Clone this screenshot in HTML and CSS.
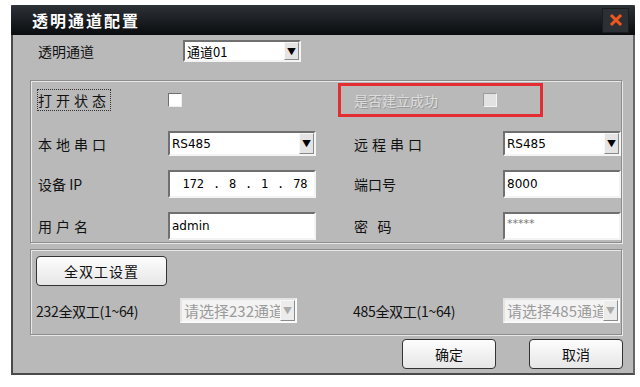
FILE: index.html
```html
<!DOCTYPE html>
<html lang="zh-CN">
<head>
  <meta charset="UTF-8">
  <title>透明通道配置</title>
  <link rel="stylesheet" href="styles.css">
</head>
<body>

  <div class="dialog">
    <div class="titlebar">
      <span class="title">透明通道配置</span>
      <span class="close-btn">
        <svg width="14" height="14" viewBox="0 0 14 14">
          <path d="M3 3 L11 11 M11 3 L3 11" stroke="#f0561e" stroke-width="3" stroke-linecap="square"/>
        </svg>
      </span>
    </div>

    <div class="content">
      <div class="channel-row">
        <span class="label">透明通道</span>
        <div class="select channel-select">
          <span class="select-text">通道01</span>
          <span class="arrow">&#9660;</span>
        </div>
      </div>

      <div class="group main-group">
        <span class="label spaced focus">打开状态</span>
        <span class="checkbox"></span>
        <div class="status-box">
          <span class="label disabled">是否建立成功</span>
          <span class="checkbox disabled-box"></span>
        </div>

        <span class="label spaced">本地串口</span>
        <div class="select">
          <span class="select-text small">RS485</span>
          <span class="arrow">&#9660;</span>
        </div>
        <span></span>
        <span class="label spaced right-col">远程串口</span>
        <div class="select">
          <span class="select-text small">RS485</span>
          <span class="arrow">&#9660;</span>
        </div>

        <span class="label">设备 IP</span>
        <div class="input ip">
          <span>172</span><span>.</span><span>8</span><span>.</span><span>1</span><span>.</span><span>78</span>
        </div>
        <span></span>
        <span class="label right-col">端口号</span>
        <div class="input"><span class="small">8000</span></div>

        <span class="label spaced">用户名</span>
        <div class="input"><span class="small">admin</span></div>
        <span></span>
        <span class="label right-col">密&nbsp;&nbsp;&nbsp;码</span>
        <div class="input password"><span>*****</span></div>
      </div>

      <div class="group duplex-group">
        <div class="duplex-top">
          <button class="btn duplex-btn">全双工设置</button>
        </div>
        <div class="duplex-row">
          <span class="label small-label">232全双工(1~64)</span>
          <div class="select disabled-select left-select">
            <span class="select-text">请选择232通道</span>
            <span class="arrow">&#9660;</span>
          </div>
          <span class="label small-label right-label">485全双工(1~64)</span>
          <div class="select disabled-select">
            <span class="select-text">请选择485通道</span>
            <span class="arrow">&#9660;</span>
          </div>
        </div>
      </div>

      <div class="footer">
        <button class="btn ok-btn">确定</button>
        <button class="btn">取消</button>
      </div>
    </div>
  </div>

</body>
</html>
```

FILE: styles.css
```css
body {
  margin: 0;
  background: #fff;
  font-family: "Noto Sans CJK SC", "DejaVu Sans", sans-serif;
}

.dialog {
  width: 620px;
  height: 368px;
  margin: 5px 0 0 11px;
  background: #b9b9b9;
  border: 2px solid #4a4a4a;
  border-top: none;
  border-right-color: #666;
  display: flex;
  flex-direction: column;
}

.titlebar {
  height: 30px;
  margin: 0 -2px;
  background: linear-gradient(#2d3237, #0a0c0e);
  border-radius: 3px 3px 0 0;
  display: flex;
  align-items: center;
  justify-content: space-between;
  padding: 0 6px 0 21px;
}

.title {
  color: #fff;
  font-weight: bold;
  font-size: 16px;
  letter-spacing: 2px;
}

.close-btn {
  width: 25px;
  height: 23px;
  background: #2c3034;
  border: 1px solid #1a1c1e;
  display: flex;
  align-items: center;
  justify-content: center;
}

.content {
  padding: 5px 4px 0 17px;
  display: flex;
  flex-direction: column;
}

.label {
  font-size: 14px;
  color: #111;
  white-space: nowrap;
}

.spaced {
  letter-spacing: 4px;
}

.focus {
  outline: 1px dotted #333;
  outline-offset: 0;
  justify-self: start;
}

.channel-row {
  display: flex;
  align-items: center;
  height: 22px;
  margin-left: 8px;
  margin-bottom: 18px;
}

.channel-row .label {
  width: 145px;
}

.select {
  background: #fff;
  border: 2px solid;
  border-color: #707070 #f4f4f4 #f4f4f4 #707070;
  display: flex;
  align-items: center;
  justify-content: space-between;
  box-sizing: border-box;
  overflow: hidden;
}

.channel-select {
  width: 118px;
  height: 22px;
}

.select-text {
  font-size: 13px;
  padding-left: 2px;
  white-space: nowrap;
  overflow: hidden;
}

.small {
  font-family: "DejaVu Sans", sans-serif;
  font-size: 12px;
}

.arrow {
  flex: none;
  width: 15px;
  height: 100%;
  box-sizing: border-box;
  background: #e4e4e4;
  border: 1px solid;
  border-color: #f8f8f8 #8a8a8a #8a8a8a #f8f8f8;
  font-size: 9px;
  display: flex;
  align-items: center;
  justify-content: center;
  color: #000;
}

.group {
  border: 1px solid #8c8c8c;
  box-shadow: inset 1px 1px 0 #e8e8e8, 1px 1px 0 #e8e8e8;
  width: 592px;
}

.main-group {
  height: 163px;
  box-sizing: border-box;
  padding: 2px 0 0 7px;
  display: grid;
  grid-template-columns: 130px 148px 23px 164px 118px;
  grid-template-rows: 34px 25px 28px 28px;
  row-gap: 14px;
  align-items: center;
}

.right-col {
  padding-left: 15px;
}

.checkbox {
  width: 12px;
  height: 12px;
  background: #fff;
  border: 1px solid;
  border-color: #707070 #eee #eee #707070;
}

.status-box {
  grid-column: 3 / 6;
  width: 205px;
  height: 34px;
  margin-left: 22px;
  box-sizing: border-box;
  border: 3px solid #e42d31;
  display: flex;
  align-items: center;
  padding-left: 13px;
}

.status-box .label {
  width: 129px;
}

.disabled {
  color: #dcdcdc;
  text-shadow: 1px 1px 0 #9a9a9a;
}

.disabled-box {
  background: #e2e2e2;
  border-color: #9a9a9a #f4f4f4 #f4f4f4 #9a9a9a;
}

.main-group .select,
.main-group .input {
  height: 100%;
}

.input {
  background: #fff;
  border: 2px solid;
  border-color: #707070 #f4f4f4 #f4f4f4 #707070;
  box-sizing: border-box;
  display: flex;
  align-items: center;
  padding-left: 2px;
}

.ip {
  justify-content: space-around;
  padding: 0 2px 0 8px;
  font-family: "DejaVu Sans Mono", monospace;
  font-size: 12px;
}

.password {
  align-items: flex-start;
  font-size: 11px;
  color: #777;
  font-family: "DejaVu Sans", sans-serif;
  padding-top: 3px;
}

.duplex-group {
  margin-top: 6px;
  height: 86px;
  box-sizing: border-box;
  padding: 6px 0 0 5px;
  display: flex;
  flex-direction: column;
}

.btn {
  font-family: "Noto Sans CJK SC", sans-serif;
  font-size: 14px;
  color: #111;
  width: 94px;
  height: 30px;
  border: 1px solid #333;
  border-radius: 4px;
  background: linear-gradient(#fdfdfd, #e6e6e6);
  padding: 0;
}

.duplex-btn {
  width: 131px;
  letter-spacing: 1px;
}

.duplex-row {
  display: flex;
  align-items: center;
  margin-top: 12px;
  height: 25px;
}

.small-label {
  font-size: 14px;
  letter-spacing: -0.3px;
}

.small-label:first-child {
  width: 144px;
}

.right-label {
  margin-left: 56px;
  width: 150px;
}

.disabled-select {
  width: 117px;
  height: 25px;
  background: #f3f3f3;
  border-color: #e4e4e4 #fafafa #fafafa #e4e4e4;
}

.disabled-select .select-text {
  color: #9a9a9a;
  font-size: 15px;
}

.disabled-select .arrow {
  color: #aaa;
  background: #ececec;
}

.footer {
  display: flex;
  justify-content: flex-end;
  gap: 33px;
  margin-top: 4px;
  padding-right: 6px;
}
```
